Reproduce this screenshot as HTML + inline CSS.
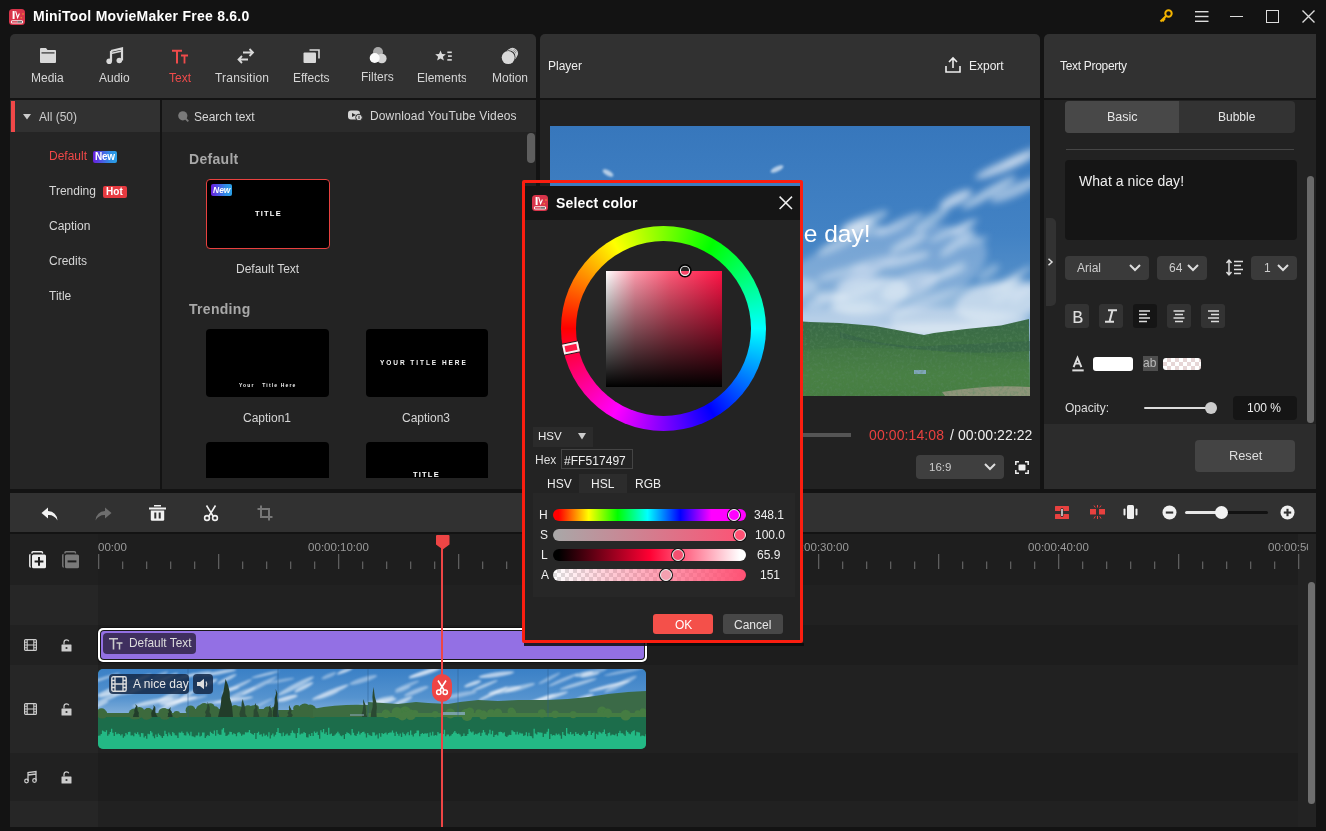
<!DOCTYPE html>
<html><head><meta charset="utf-8">
<style>
*{margin:0;padding:0;box-sizing:border-box}
html,body{width:1326px;height:831px;overflow:hidden;background:#131313;font-family:"Liberation Sans",sans-serif;color:#ddd}
.a{position:absolute}
.t{position:absolute;white-space:nowrap;line-height:1;will-change:transform}
svg{position:absolute;overflow:visible}
.lbl{font-size:12px;color:#d6d6d6}
</style></head><body>
<!-- TITLE BAR -->
<svg style="left:9px;top:9px" width="16" height="16" viewBox="0 0 16 16">
 <rect x="0" y="0" width="16" height="16" rx="3.5" fill="#d8344a"/>
 <rect x="3.6" y="2" width="2" height="8" fill="#fff"/>
 <path d="M6.6 2.2 L8.6 8.6 L10.4 4.6" stroke="#fff" stroke-width="1.1" fill="none"/>
 <circle cx="14" cy="5" r="0.8" fill="#f4a030"/><circle cx="12.2" cy="8.8" r="0.7" fill="#f4a030"/>
 <rect x="1.8" y="11.3" width="12.4" height="3.2" rx="1.6" fill="#f4f4f4"/>
 <rect x="3" y="12.2" width="5.5" height="1.4" fill="#d8344a"/>
 <rect x="8.5" y="12.2" width="4.5" height="1.4" fill="#555"/>
</svg>
<div class="t" style="left:33px;top:9px;font-size:14px;font-weight:bold;color:#fff;letter-spacing:0.25px">MiniTool MovieMaker Free 8.6.0</div>
<!-- key -->
<svg style="left:1159px;top:9px" width="14" height="14" viewBox="0 0 14 14">
 <circle cx="9.5" cy="4.5" r="3.2" fill="none" stroke="#f4b400" stroke-width="2"/>
 <path d="M7.3 6.7 L1.5 12.5 M3.2 10.8 L4.8 12.4 M4.6 9.4 L6 10.8" stroke="#f4b400" stroke-width="2" fill="none"/>
</svg>
<svg style="left:1195px;top:11px" width="14" height="11" viewBox="0 0 14 11">
 <rect x="0" y="0" width="13.5" height="1.4" fill="#ddd"/><rect x="0" y="4.8" width="13.5" height="1.4" fill="#ddd"/><rect x="0" y="9.6" width="13.5" height="1.4" fill="#ddd"/>
</svg>
<div class="a" style="left:1230px;top:15.5px;width:13px;height:1.4px;background:#ddd"></div>
<div class="a" style="left:1266px;top:10px;width:13px;height:12.5px;border:1.3px solid #ddd"></div>
<svg style="left:1302px;top:10px" width="13" height="13" viewBox="0 0 13 13"><path d="M0.5 0.5 L12.5 12.5 M12.5 0.5 L0.5 12.5" stroke="#ddd" stroke-width="1.4"/></svg>

<!-- TOP LEFT TOOLBAR -->
<div class="a" style="left:10px;top:34px;width:526px;height:64px;background:#313131;border-radius:5px 5px 0 0"></div>
<!-- media icon -->
<svg style="left:40px;top:48px" width="16" height="15" viewBox="0 0 16 15">
 <path d="M0 1 Q0 0 1 0 L6 0 L7.5 2 L15 2 Q16 2 16 3 L16 14 Q16 15 15 15 L1 15 Q0 15 0 14 Z" fill="#d9d9d9"/>
 <rect x="1.5" y="4.3" width="13" height="1.2" fill="#313131"/>
</svg>
<div class="t lbl" style="left:31px;top:72px">Media</div>
<!-- audio icon -->
<svg style="left:106px;top:48px" width="17" height="16" viewBox="0 0 17 16">
 <path d="M5 3 L16 0.5 L16 12.5" stroke="#d9d9d9" stroke-width="2.2" fill="none"/>
 <path d="M5 3 L5 13" stroke="#d9d9d9" stroke-width="2.2"/>
 <path d="M5 5.5 L16 3" stroke="#d9d9d9" stroke-width="1.6"/>
 <circle cx="3.2" cy="13.2" r="2.8" fill="#d9d9d9"/><circle cx="13.3" cy="12.5" r="2.8" fill="#d9d9d9"/>
</svg>
<div class="t lbl" style="left:99px;top:72px">Audio</div>
<!-- text icon -->
<svg style="left:172px;top:50px" width="16" height="14" viewBox="0 0 16 14">
 <path d="M0 0.8 H10 M5 0.8 V13.5" stroke="#ef4b4b" stroke-width="2"/>
 <path d="M9 5.5 H16 M12.5 5.5 V13.5" stroke="#ef4b4b" stroke-width="1.8"/>
</svg>
<div class="t lbl" style="left:169px;top:72px;color:#ef4b4b">Text</div>
<!-- transition icon -->
<svg style="left:237px;top:48px" width="18" height="16" viewBox="0 0 18 16">
 <path d="M6 4.5 H16 M12.5 1 L16 4.5 L12.5 8" stroke="#d9d9d9" stroke-width="1.8" fill="none"/>
 <path d="M11 11.5 H1.5 M5 8 L1.5 11.5 L5 15" stroke="#d9d9d9" stroke-width="1.8" fill="none"/>
</svg>
<div class="t lbl" style="left:215px;top:72px;letter-spacing:0.2px">Transition</div>
<!-- effects icon -->
<svg style="left:303px;top:48px" width="18" height="16" viewBox="0 0 18 16">
 <path d="M6.5 2 H16 V10.5" stroke="#d9d9d9" stroke-width="1.6" fill="none"/>
 <rect x="0.5" y="4.5" width="12.5" height="10.5" rx="1" fill="#d9d9d9"/>
</svg>
<div class="t lbl" style="left:293px;top:72px">Effects</div>
<!-- filters icon -->
<svg style="left:369px;top:46px" width="18" height="18" viewBox="0 0 18 18">
 <circle cx="9" cy="6" r="5" fill="#a9a9a9"/>
 <circle cx="12.8" cy="12.5" r="4.8" fill="#d4d4d4"/>
 <circle cx="5.7" cy="12" r="5" fill="#fafafa"/>
</svg>
<div class="t lbl" style="left:361px;top:71px">Filters</div>
<!-- elements icon -->
<svg style="left:435px;top:50px" width="18" height="12" viewBox="0 0 18 12">
 <path d="M5.5 0.5 L7 4 L10.8 4.2 L7.9 6.7 L8.9 10.5 L5.5 8.4 L2.1 10.5 L3.1 6.7 L0.2 4.2 L4 4 Z" fill="#d9d9d9"/>
 <rect x="12.3" y="1.5" width="4.5" height="1.6" fill="#d9d9d9"/><rect x="13" y="5.3" width="3.8" height="1.6" fill="#d9d9d9"/><rect x="12.3" y="9.1" width="4.5" height="1.6" fill="#d9d9d9"/>
</svg>
<div class="t lbl" style="left:417px;top:72px;width:48.5px;overflow:hidden">Elements</div>
<!-- motion icon -->
<svg style="left:501px;top:47px" width="19" height="17" viewBox="0 0 19 17">
 <path d="M6.02 3.67 A6.1 6.1 0 0 1 14.13 11.78 M7.63 2.72 A5.6 5.6 0 0 1 15.08 10.17 M9.29 1.87 A5.0 5.0 0 0 1 15.93 8.51 " stroke="#d0d0d0" stroke-width="1.2" fill="none"/>
 <circle cx="7.2" cy="10.6" r="7.2" fill="#313131"/>
 <circle cx="7.2" cy="10.6" r="6.5" fill="#d9d9d9"/>
</svg>
<div class="t lbl" style="left:492px;top:72px">Motion</div>

<!-- LEFT SIDEBAR -->
<div class="a" style="left:10px;top:100px;width:150px;height:389px;background:#252525"></div>
<div class="a" style="left:10px;top:100px;width:150px;height:32px;background:#313131"></div>
<div class="a" style="left:11px;top:101px;width:4px;height:31px;background:#f04848"></div>
<svg style="left:23px;top:114px" width="8" height="6" viewBox="0 0 8 6"><path d="M0 0 H8 L4 5.5 Z" fill="#ccc"/></svg>
<div class="t lbl" style="left:39px;top:111px;color:#ccc">All (50)</div>
<div class="t lbl" style="left:49px;top:150px;color:#f04848">Default</div>
<div class="a" style="left:93px;top:151px;width:24px;height:12px;border-radius:2px;background:linear-gradient(90deg,#6a1ee0,#2f8ee6 70%,#2aa0e6)"></div>
<div class="t" style="left:94.5px;top:152px;font-size:10px;font-weight:bold;color:#fff;letter-spacing:-0.3px">New</div>
<div class="t lbl" style="left:49px;top:185px">Trending</div>
<div class="a" style="left:103px;top:186px;width:24px;height:12px;border-radius:2px;background:#e63a40"></div>
<div class="t" style="left:105.5px;top:187px;font-size:10px;font-weight:bold;color:#fff;letter-spacing:0.1px">Hot</div>
<div class="t lbl" style="left:49px;top:220px">Caption</div>
<div class="t lbl" style="left:49px;top:255px">Credits</div>
<div class="t lbl" style="left:49px;top:290px">Title</div>

<!-- CONTENT -->
<div class="a" style="left:162px;top:100px;width:374px;height:389px;background:#232323"></div>
<div class="a" style="left:162px;top:100px;width:374px;height:32px;background:#2b2b2b"></div>
<svg style="left:178px;top:111px" width="11" height="11" viewBox="0 0 11 11"><circle cx="4.8" cy="4.8" r="4.6" fill="#7a7a7a"/><path d="M7.5 7.5 L10.3 10.3" stroke="#7a7a7a" stroke-width="1.8"/></svg>
<div class="t lbl" style="left:194px;top:111px">Search text</div>
<svg style="left:348px;top:110px" width="15" height="11" viewBox="0 0 15 11">
 <rect x="0" y="0.5" width="12" height="9" rx="3" fill="#d6d6d6"/>
 <path d="M4 3 L8 5 L4 7 Z" fill="#2b2b2b"/>
 <circle cx="11" cy="7.5" r="3.3" fill="#d6d6d6" stroke="#2b2b2b" stroke-width="1"/>
 <path d="M11 5.8 V9" stroke="#2b2b2b" stroke-width="1"/>
</svg>
<div class="t lbl" style="left:370px;top:110px;letter-spacing:0.14px">Download YouTube Videos</div>
<div class="a" style="left:527px;top:133px;width:8px;height:30px;border-radius:4px;background:#5e5e5e"></div>

<div class="t" style="left:188.5px;top:152px;font-size:14px;font-weight:bold;color:#a8a8a8;letter-spacing:0.3px">Default</div>
<div class="a" style="left:206px;top:179px;width:124px;height:70px;background:#000;border:1px solid #e8413f;border-radius:4px"></div>
<div class="a" style="left:211px;top:184px;width:21px;height:12px;border-radius:2px;background:linear-gradient(90deg,#6a1ee0,#2f8ee6 70%,#2aa0e6)"></div>
<div class="t" style="left:212.5px;top:186px;font-size:8.5px;font-weight:bold;color:#fff;font-style:italic">New</div>
<div class="t" style="left:254.5px;top:210px;font-size:7.5px;font-weight:bold;color:#fff;letter-spacing:1.2px">TITLE</div>
<div class="t lbl" style="left:236px;top:263px">Default Text</div>

<div class="t" style="left:188.5px;top:302px;font-size:14px;font-weight:bold;color:#a8a8a8;letter-spacing:0.3px">Trending</div>
<div class="a" style="left:206px;top:329px;width:123px;height:68px;background:#000;border-radius:4px"></div>
<div class="t" style="left:239px;top:383px;font-size:5px;font-weight:bold;color:#eee;letter-spacing:1.15px">Your&nbsp;&nbsp; Title Here</div>
<div class="t lbl" style="left:243px;top:412px">Caption1</div>
<div class="a" style="left:366px;top:329px;width:122px;height:68px;background:#000;border-radius:4px"></div>
<div class="t" style="left:380px;top:360px;font-size:6.5px;font-weight:bold;color:#f4f4f4;letter-spacing:1.95px">YOUR TITLE HERE</div>
<div class="t lbl" style="left:402px;top:412px">Caption3</div>
<div class="a" style="left:206px;top:442px;width:123px;height:36px;background:#000;border-radius:4px 4px 0 0"></div>
<div class="a" style="left:366px;top:442px;width:122px;height:36px;background:#000;border-radius:4px 4px 0 0;overflow:hidden">
 <div class="t" style="left:47px;top:29px;font-size:7.5px;font-weight:bold;color:#fff;letter-spacing:1.2px">TITLE</div>
</div>

<!-- PLAYER -->
<div class="a" style="left:540px;top:34px;width:500px;height:64px;background:#313131;border-radius:5px 5px 0 0"></div>
<div class="t lbl" style="left:548px;top:60px;color:#eee">Player</div>
<svg style="left:945px;top:57px" width="16" height="16" viewBox="0 0 16 16">
 <path d="M8 11 V1.5 M4 5 L8 1 L12 5" stroke="#eee" stroke-width="1.6" fill="none"/>
 <path d="M1 9 V15 H15 V9" stroke="#eee" stroke-width="1.6" fill="none"/>
</svg>
<div class="t lbl" style="left:969px;top:60px;color:#eee">Export</div>
<div class="a" style="left:540px;top:100px;width:500px;height:389px;background:#222"></div>
<div id="video" class="a" style="left:550px;top:126px;width:480px;height:270px;overflow:hidden;background:#3b7cc0">
<svg style="left:0;top:0" width="480" height="270" viewBox="0 0 480 270">
 <defs>
  <linearGradient id="sky" x1="0" y1="0" x2="0" y2="1">
   <stop offset="0" stop-color="#3777bc"/><stop offset="0.4" stop-color="#4282c4"/><stop offset="0.7" stop-color="#5f97cc"/><stop offset="0.8" stop-color="#8fb5da"/>
  </linearGradient>
  <linearGradient id="mtn" x1="0" y1="0" x2="0" y2="1">
   <stop offset="0" stop-color="#386848"/><stop offset="0.4" stop-color="#3f7244"/><stop offset="0.75" stop-color="#488044"/><stop offset="1" stop-color="#457c40"/>
  </linearGradient>
  <filter id="bl2v" x="-50%" y="-100%" width="200%" height="300%"><feGaussianBlur stdDeviation="1.2"/></filter>
  <filter id="bl" x="-50%" y="-100%" width="200%" height="300%"><feGaussianBlur stdDeviation="3.5"/></filter>
 </defs>
 <rect width="480" height="270" fill="url(#sky)"/>
 <g filter="url(#bl)" fill="#e9f0f7"><ellipse cx="330.0" cy="150.0" rx="110.0" ry="45.0" transform="rotate(-15.0 330.0 150.0)" opacity="0.30"/><ellipse cx="420.0" cy="185.0" rx="80.0" ry="25.0" transform="rotate(-8.0 420.0 185.0)" opacity="0.40"/><ellipse cx="340.0" cy="195.0" rx="140.0" ry="14.0" transform="rotate(0.0 340.0 195.0)" opacity="0.45"/><ellipse cx="320.0" cy="170.0" rx="40.0" ry="18.0" transform="rotate(-10.0 320.0 170.0)" opacity="0.55"/><ellipse cx="360.0" cy="160.0" rx="30.0" ry="12.0" transform="rotate(-20.0 360.0 160.0)" opacity="0.45"/><ellipse cx="292.9" cy="114.3" rx="29.1" ry="5.8" transform="rotate(-28.7 292.9 114.3)" opacity="0.46"/><ellipse cx="313.5" cy="97.0" rx="27.1" ry="5.7" transform="rotate(-25.4 313.5 97.0)" opacity="0.48"/><ellipse cx="349.6" cy="98.2" rx="25.6" ry="4.7" transform="rotate(-24.5 349.6 98.2)" opacity="0.52"/><ellipse cx="381.3" cy="93.6" rx="20.2" ry="5.4" transform="rotate(-32.3 381.3 93.6)" opacity="0.48"/><ellipse cx="405.7" cy="73.2" rx="18.0" ry="5.6" transform="rotate(-27.1 405.7 73.2)" opacity="0.70"/><ellipse cx="439.0" cy="66.6" rx="31.5" ry="4.6" transform="rotate(-31.0 439.0 66.6)" opacity="0.62"/><ellipse cx="466.0" cy="63.9" rx="27.7" ry="5.9" transform="rotate(-24.7 466.0 63.9)" opacity="0.54"/><ellipse cx="413.3" cy="101.7" rx="13.0" ry="3.3" transform="rotate(-33.1 413.3 101.7)" opacity="0.50"/><ellipse cx="400.3" cy="144.2" rx="17.4" ry="3.3" transform="rotate(-27.1 400.3 144.2)" opacity="0.43"/><ellipse cx="438.5" cy="146.4" rx="12.9" ry="4.9" transform="rotate(-36.2 438.5 146.4)" opacity="0.36"/><ellipse cx="460.0" cy="157.6" rx="12.3" ry="4.5" transform="rotate(-35.3 460.0 157.6)" opacity="0.35"/><ellipse cx="403.7" cy="104.5" rx="27.3" ry="3.0" transform="rotate(-24.1 403.7 104.5)" opacity="0.54"/><ellipse cx="474.4" cy="165.4" rx="17.5" ry="3.4" transform="rotate(-40.2 474.4 165.4)" opacity="0.38"/><ellipse cx="459.9" cy="153.8" rx="25.8" ry="2.6" transform="rotate(-31.6 459.9 153.8)" opacity="0.59"/><ellipse cx="407.3" cy="117.3" rx="21.8" ry="4.8" transform="rotate(-37.3 407.3 117.3)" opacity="0.49"/><ellipse cx="425.0" cy="115.3" rx="14.8" ry="2.7" transform="rotate(-18.5 425.0 115.3)" opacity="0.39"/><ellipse cx="455.1" cy="169.7" rx="14.6" ry="2.6" transform="rotate(-22.6 455.1 169.7)" opacity="0.45"/><ellipse cx="293.2" cy="146.4" rx="26.9" ry="4.4" transform="rotate(-15.8 293.2 146.4)" opacity="0.41"/><ellipse cx="267.8" cy="177.0" rx="12.6" ry="4.5" transform="rotate(-12.8 267.8 177.0)" opacity="0.48"/><ellipse cx="393.0" cy="149.9" rx="26.2" ry="3.3" transform="rotate(-18.6 393.0 149.9)" opacity="0.41"/><ellipse cx="280.9" cy="170.2" rx="17.3" ry="4.4" transform="rotate(0.6 280.9 170.2)" opacity="0.54"/><ellipse cx="323.5" cy="136.4" rx="25.1" ry="4.4" transform="rotate(-15.1 323.5 136.4)" opacity="0.37"/><ellipse cx="316.5" cy="103.9" rx="18.8" ry="6.0" transform="rotate(-4.1 316.5 103.9)" opacity="0.42"/><ellipse cx="307.4" cy="98.5" rx="16.9" ry="5.3" transform="rotate(-17.8 307.4 98.5)" opacity="0.52"/><ellipse cx="310.6" cy="164.7" rx="25.9" ry="5.1" transform="rotate(-21.9 310.6 164.7)" opacity="0.39"/><ellipse cx="358.6" cy="116.7" rx="20.7" ry="5.3" transform="rotate(-26.6 358.6 116.7)" opacity="0.47"/><ellipse cx="301.1" cy="179.8" rx="23.7" ry="4.7" transform="rotate(-5.0 301.1 179.8)" opacity="0.36"/><ellipse cx="354.0" cy="134.0" rx="26.7" ry="4.9" transform="rotate(-14.3 354.0 134.0)" opacity="0.50"/><ellipse cx="308.7" cy="151.2" rx="25.3" ry="5.5" transform="rotate(-24.1 308.7 151.2)" opacity="0.52"/><ellipse cx="450.0" cy="175.0" rx="45.0" ry="20.0" transform="rotate(-10.0 450.0 175.0)" opacity="0.55"/><ellipse cx="400.0" cy="205.0" rx="90.0" ry="8.0" transform="rotate(0.0 400.0 205.0)" opacity="0.50"/><ellipse cx="455.0" cy="40.0" rx="32.0" ry="5.0" transform="rotate(-22.0 455.0 40.0)" opacity="0.70"/><ellipse cx="470.0" cy="30.0" rx="20.0" ry="3.0" transform="rotate(-25.0 470.0 30.0)" opacity="0.50"/><ellipse cx="150.0" cy="180.0" rx="120.0" ry="20.0" transform="rotate(-10.0 150.0 180.0)" opacity="0.40"/></g>
 <path d="M0 195 L60 192 L120 190 L200 192 L260 196 L290 197 L325 200 L374 209 L384 207 L416 203 L451 199.5 L479 193 L480 270 L0 270 Z" fill="url(#mtn)"/>
 <path d="M250 225 Q330 215 480 236 L480 270 L250 270 Z" fill="#4a8244" opacity="0.35"/>
 <path d="M290 206 Q340 222 380 220 L480 215 L480 225 Q400 232 290 212 Z" fill="#34604a" opacity="0.5"/>
 <path d="M392 266 Q440 258 480 261 L480 270 L395 270 Z" fill="#a69e8c" opacity="0.75"/>
 <rect x="364" y="244" width="12" height="4" fill="#8fb0d8" opacity="0.8"/>
 
 <g filter="url(#bl2v)" fill="#eaf1f8"><ellipse cx="58" cy="47" rx="6" ry="2.5" transform="rotate(30 58 47)" opacity="0.7"/><ellipse cx="227" cy="43" rx="7" ry="2.5" transform="rotate(-25 227 43)" opacity="0.7"/></g>
 <filter id="noise" x="0" y="0" width="100%" height="100%"><feTurbulence type="fractalNoise" baseFrequency="0.35" numOctaves="2" seed="4"/><feColorMatrix values="0 0 0 0 0.1  0 0 0 0 0.25  0 0 0 0 0.12  0 0 0 -2.2 1.2"/></filter>
 <clipPath id="mclip"><path d="M0 195 L60 192 L120 190 L200 192 L260 196 L290 197 L325 200 L374 209 L384 207 L416 203 L451 199.5 L479 193 L480 270 L0 270 Z"/></clipPath>
 <rect x="0" y="185" width="480" height="85" filter="url(#noise)" clip-path="url(#mclip)" opacity="0.55"/>
</svg>
<div class="t" style="left:138.2px;top:96px;font-size:24.5px;color:#fff">What a nice day!</div>
</div>
</div>
<div class="a" style="left:550px;top:433px;width:301px;height:4px;background:#555"></div>
<div class="t" style="left:869px;top:428px;font-size:14px;color:#e8413f;letter-spacing:0.1px">00:00:14:08</div>
<div class="t" style="left:950px;top:428px;font-size:14px;color:#eee;letter-spacing:0.05px">/ 00:00:22:22</div>
<div class="a" style="left:916px;top:455px;width:88px;height:24px;background:#3f3f3f;border-radius:4px"></div>
<div class="t" style="left:929px;top:462px;font-size:11.5px;color:#ccc">16:9</div>
<svg style="left:984px;top:463px" width="12" height="7" viewBox="0 0 12 7"><path d="M1 1 L6 6 L11 1" stroke="#ddd" stroke-width="2" fill="none"/></svg>
<svg style="left:1015px;top:461px" width="14" height="13" viewBox="0 0 14 13">
 <path d="M0.8 4 V0.8 H4 M10 0.8 H13.2 V4 M13.2 9 V12.2 H10 M4 12.2 H0.8 V9" stroke="#eee" stroke-width="1.5" fill="none"/>
 <rect x="3.5" y="3.5" width="7" height="6" rx="1" fill="#eee"/>
</svg>

<!-- TEXT PROPERTY -->
<div class="a" style="left:1044px;top:34px;width:272px;height:64px;background:#313131;border-radius:5px 0 0 0"></div>
<div class="t" style="left:1060px;top:60px;font-size:12px;color:#eee;letter-spacing:-0.3px">Text Property</div>
<div class="a" style="left:1044px;top:100px;width:272px;height:324px;background:#222"></div>
<div class="a" style="left:1044px;top:424px;width:272px;height:65px;background:#2c2c2c"></div>


<!-- TP CONTENT -->
<div class="a" style="left:1065px;top:101px;width:230px;height:32px;background:#333;border-radius:4px"></div>
<div class="a" style="left:1065px;top:101px;width:114px;height:32px;background:#484848;border-radius:4px 0 0 4px"></div>
<div class="t lbl" style="left:1107px;top:111px;color:#e6e6e6;font-size:12.5px">Basic</div>
<div class="t lbl" style="left:1218px;top:111px;color:#e6e6e6">Bubble</div>
<div class="a" style="left:1066px;top:149px;width:228px;height:1px;background:#464646"></div>
<div class="a" style="left:1065px;top:160px;width:232px;height:80px;background:#151515;border-radius:4px"></div>
<div class="t" style="left:1079px;top:174px;font-size:14px;color:#eee;letter-spacing:0.05px">What a nice day!</div>
<div class="a" style="left:1307px;top:176px;width:7px;height:247px;border-radius:3.5px;background:#6a6a6a"></div>
<div class="a" style="left:1046px;top:218px;width:10px;height:88px;border-radius:0 5px 5px 0;background:#323232"></div>
<svg style="left:1047px;top:258px" width="7" height="8" viewBox="0 0 7 8"><path d="M1.5 0.8 L5 4 L1.5 7.2" stroke="#ddd" stroke-width="1.5" fill="none"/></svg>
<div class="a" style="left:1065px;top:256px;width:84px;height:24px;background:#3a3a3a;border-radius:4px"></div>
<div class="t lbl" style="left:1077px;top:262px;color:#ccc">Arial</div>
<svg style="left:1129px;top:264px" width="12" height="8" viewBox="0 0 12 8"><path d="M1 1 L6 6 L11 1" stroke="#ddd" stroke-width="2" fill="none"/></svg>
<div class="a" style="left:1157px;top:256px;width:50px;height:24px;background:#3a3a3a;border-radius:4px"></div>
<div class="t lbl" style="left:1169px;top:262px;color:#ccc">64</div>
<svg style="left:1187px;top:264px" width="12" height="8" viewBox="0 0 12 8"><path d="M1 1 L6 6 L11 1" stroke="#ddd" stroke-width="2" fill="none"/></svg>
<svg style="left:1226px;top:259px" width="17" height="17" viewBox="0 0 17 17">
 <path d="M3 1.5 V15.5 M0.5 4 L3 1.2 L5.5 4 M0.5 13 L3 15.8 L5.5 13" stroke="#ddd" stroke-width="1.5" fill="none"/>
 <path d="M8 2.5 H17 M8 6.5 H15 M8 10.5 H17 M8 14.5 H15" stroke="#ddd" stroke-width="1.6"/>
</svg>
<div class="a" style="left:1251px;top:256px;width:46px;height:24px;background:#3a3a3a;border-radius:4px"></div>
<div class="t lbl" style="left:1264px;top:262px;color:#ccc">1</div>
<svg style="left:1277px;top:264px" width="12" height="8" viewBox="0 0 12 8"><path d="M1 1 L6 6 L11 1" stroke="#ddd" stroke-width="2" fill="none"/></svg>
<div class="a" style="left:1065px;top:304px;width:24px;height:24px;background:#333;border-radius:3px"></div>
<svg style="left:1072px;top:310px" width="12" height="14" viewBox="0 0 12 14"><path d="M1.6 1 H6.2 Q9.6 1 9.6 3.7 Q9.6 6 7.2 6.6 Q10.6 7.1 10.6 9.8 Q10.6 13 6.8 13 H1.6 Z M3.4 2.6 V6 H6 Q7.8 6 7.8 4.3 Q7.8 2.6 6 2.6 Z M3.4 7.5 V11.4 H6.4 Q8.7 11.4 8.7 9.45 Q8.7 7.5 6.4 7.5 Z" fill="#ddd" fill-rule="evenodd"/></svg>
<div class="a" style="left:1099px;top:304px;width:24px;height:24px;background:#333;border-radius:3px"></div>
<svg style="left:1104px;top:309px" width="14" height="14" viewBox="0 0 14 14"><path d="M4 1.2 H13 M1 12.8 H10 M8.5 1.2 L5.5 12.8" stroke="#ddd" stroke-width="2" fill="none"/></svg>
<div class="a" style="left:1133px;top:304px;width:24px;height:24px;background:#151515;border-radius:3px"></div>
<svg style="left:1139px;top:310px" width="12" height="13" viewBox="0 0 12 13"><path d="M0 1 H11 M0 4.5 H8 M0 8 H11 M0 11.5 H8" stroke="#ddd" stroke-width="1.6"/></svg>
<div class="a" style="left:1167px;top:304px;width:24px;height:24px;background:#333;border-radius:3px"></div>
<svg style="left:1173px;top:310px" width="12" height="13" viewBox="0 0 12 13"><path d="M0.5 1 H11.5 M2 4.5 H10 M0.5 8 H11.5 M2 11.5 H10" stroke="#ddd" stroke-width="1.6"/></svg>
<div class="a" style="left:1201px;top:304px;width:24px;height:24px;background:#333;border-radius:3px"></div>
<svg style="left:1207px;top:310px" width="12" height="13" viewBox="0 0 12 13"><path d="M1 1 H12 M4 4.5 H12 M1 8 H12 M4 11.5 H12" stroke="#ddd" stroke-width="1.6"/></svg>
<svg style="left:1071px;top:357px" width="14" height="15" viewBox="0 0 14 15"><path d="M2.6 10.2 L6.5 0.8 L10.4 10.2 M4.2 6.6 H8.8" stroke="#ddd" stroke-width="1.9" fill="none"/><rect x="1.3" y="12.4" width="11.4" height="2" fill="#ddd"/></svg>
<div class="a" style="left:1093px;top:357px;width:40px;height:14px;background:#fff;border-radius:3px"></div>
<div class="a" style="left:1143px;top:356px;width:15px;height:15px;background:#4e4e4e"></div>
<div class="t" style="left:1143px;top:357px;font-size:12px;color:#bbb">ab</div>
<div class="a" style="left:1163px;top:358px;width:38px;height:12px;border-radius:3px;background-color:#fff;background-image:linear-gradient(45deg,#e6d6d6 25%,transparent 25%,transparent 75%,#e6d6d6 75%),linear-gradient(45deg,#e6d6d6 25%,transparent 25%,transparent 75%,#e6d6d6 75%);background-size:8px 8px;background-position:0 0,4px 4px"></div>
<div class="t lbl" style="left:1065px;top:402px;color:#ddd">Opacity:</div>
<div class="a" style="left:1144px;top:407px;width:70px;height:2px;background:#ddd;border-radius:1px"></div>
<div class="a" style="left:1205px;top:402px;width:12px;height:12px;border-radius:6px;background:#ccc"></div>
<div class="a" style="left:1233px;top:396px;width:64px;height:24px;background:#151515;border-radius:4px"></div>
<div class="t lbl" style="left:1247px;top:402px;color:#eee">100 %</div>
<div class="a" style="left:1195px;top:440px;width:100px;height:32px;background:#444;border-radius:4px"></div>
<div class="t lbl" style="left:1229px;top:450px;color:#ddd;font-size:12.8px">Reset</div>

<!-- TIMELINE -->
<div class="a" style="left:10px;top:493px;width:1306px;height:39px;background:#313131"></div>

<!-- TIMELINE TOOLBAR -->
<svg style="left:41px;top:507px" width="17" height="14" viewBox="0 0 17 14">
 <path d="M7 0.5 L0.5 6 L7 11.5 V8 Q13 7.5 16.5 13.5 Q15.5 4.5 7 4 Z" fill="#f2f2f2"/>
</svg>
<svg style="left:95px;top:507px" width="17" height="14" viewBox="0 0 17 14">
 <path d="M10 0.5 L16.5 6 L10 11.5 V8 Q4 7.5 0.5 13.5 Q1.5 4.5 10 4 Z" fill="#6e6e6e"/>
</svg>
<svg style="left:149px;top:505px" width="17" height="16" viewBox="0 0 17 16">
 <rect x="5" y="0" width="7" height="1.5" fill="#f2f2f2"/>
 <rect x="0" y="2.5" width="17" height="2" fill="#f2f2f2"/>
 <path d="M1.8 5.5 H15.2 V14.5 Q15.2 15.8 14 15.8 H3 Q1.8 15.8 1.8 14.5 Z" fill="#f2f2f2"/>
 <rect x="5.3" y="7.5" width="2" height="6" fill="#313131"/><rect x="9.7" y="7.5" width="2" height="6" fill="#313131"/>
</svg>
<svg style="left:203px;top:505px" width="16" height="16" viewBox="0 0 16 16">
 <path d="M3.5 0.5 L10 11 M12.5 0.5 L6 11" stroke="#f2f2f2" stroke-width="1.6"/>
 <circle cx="4" cy="13" r="2.4" fill="none" stroke="#f2f2f2" stroke-width="1.6"/>
 <circle cx="12" cy="13" r="2.4" fill="none" stroke="#f2f2f2" stroke-width="1.6"/>
</svg>
<svg style="left:257px;top:505px" width="16" height="16" viewBox="0 0 16 16">
 <path d="M4 0.5 V12 H15.5 M0.5 4 H12 V15.5" stroke="#777" stroke-width="2" fill="none"/>
</svg>
<svg style="left:1055px;top:506px" width="14" height="13" viewBox="0 0 14 13">
 <rect x="0" y="0" width="14" height="5" rx="0.5" fill="#e8413f"/><rect x="0" y="8" width="14" height="5" rx="0.5" fill="#e8413f"/>
 <rect x="5.5" y="2" width="3" height="9" rx="1.5" fill="#313131"/><rect x="6.3" y="3" width="1.4" height="7" fill="#eee"/>
</svg>
<svg style="left:1090px;top:505px" width="15" height="14" viewBox="0 0 15 14">
 <rect x="0" y="4" width="6" height="5.5" fill="#e8413f"/><rect x="9" y="4" width="6" height="5.5" fill="#e8413f"/>
 <path d="M7.5 0 V2.5 M7.5 11 V14 M4 0.5 L5.3 2.5 M11 0.5 L9.7 2.5 M4 13.5 L5.3 11.3 M11 13.5 L9.7 11.3" stroke="#e8413f" stroke-width="1"/>
</svg>
<svg style="left:1123px;top:505px" width="15" height="14" viewBox="0 0 15 14">
 <rect x="4" y="0" width="7" height="14" rx="1.5" fill="#f0f0f0"/>
 <rect x="0.5" y="3.5" width="2" height="7" rx="1" fill="#f0f0f0"/><rect x="12.5" y="3.5" width="2" height="7" rx="1" fill="#f0f0f0"/>
</svg>
<svg style="left:1162px;top:505px" width="15" height="15" viewBox="0 0 15 15"><circle cx="7.5" cy="7.5" r="7" fill="#f0f0f0"/><rect x="3.8" y="6.5" width="7.4" height="2.1" fill="#313131"/></svg>
<div class="a" style="left:1185px;top:511px;width:83px;height:3px;background:#121212;border-radius:1.5px"></div>
<div class="a" style="left:1185px;top:511px;width:36px;height:3px;background:#e6e6e6;border-radius:1.5px"></div>
<div class="a" style="left:1214.5px;top:506px;width:13px;height:13px;border-radius:50%;background:#f2f2f2"></div>
<svg style="left:1280px;top:505px" width="15" height="15" viewBox="0 0 15 15"><circle cx="7.5" cy="7.5" r="7" fill="#f0f0f0"/><rect x="3.8" y="6.5" width="7.4" height="2.1" fill="#313131"/><rect x="6.45" y="3.8" width="2.1" height="7.4" fill="#313131"/></svg>

<!-- TIMELINE BODY -->
<div class="a" style="left:10px;top:534px;width:88px;height:51px;background:#202020"></div>
<div class="a" style="left:98px;top:534px;width:1200px;height:51px;background:#1e1e1e"></div><div class="a" style="left:1298px;top:534px;width:18px;height:51px;background:#232323"></div>
<svg style="left:29px;top:551px" width="18" height="18" viewBox="0 0 18 18">
 <path d="M3 2.5 V1.8 Q3 0.8 4 0.8 H12.5 Q13.5 0.8 13.5 1.8 V2.5" stroke="#eee" stroke-width="1.4" fill="none"/>
 <path d="M1.5 3.5 Q0.8 3.5 0.8 4.5 V15 Q0.8 16 1.8 16" stroke="#eee" stroke-width="1.4" fill="none"/>
 <rect x="3" y="3.5" width="14" height="13.8" rx="1.5" fill="#eee"/>
 <path d="M10 6 V14.8 M5.6 10.4 H14.4" stroke="#1f1f1f" stroke-width="2"/>
</svg>
<svg style="left:62px;top:551px" width="18" height="18" viewBox="0 0 18 18">
 <path d="M3 2.5 V1.8 Q3 0.8 4 0.8 H12.5 Q13.5 0.8 13.5 1.8 V2.5" stroke="#7a7a7a" stroke-width="1.4" fill="none"/>
 <path d="M1.5 3.5 Q0.8 3.5 0.8 4.5 V15 Q0.8 16 1.8 16" stroke="#7a7a7a" stroke-width="1.4" fill="none"/>
 <rect x="3" y="3.5" width="14" height="13.8" rx="1.5" fill="#7a7a7a"/>
 <path d="M5.6 10.4 H14.4" stroke="#1f1f1f" stroke-width="2"/>
</svg>
<svg style="left:98px;top:554px" width="1210" height="16"><rect x="0" y="0" width="1.3" height="15" fill="#5e5e5e"/><rect x="24" y="7.5" width="1.3" height="7.5" fill="#5e5e5e"/><rect x="48" y="7.5" width="1.3" height="7.5" fill="#5e5e5e"/><rect x="72" y="7.5" width="1.3" height="7.5" fill="#5e5e5e"/><rect x="96" y="7.5" width="1.3" height="7.5" fill="#5e5e5e"/><rect x="120" y="0" width="1.3" height="15" fill="#5e5e5e"/><rect x="144" y="7.5" width="1.3" height="7.5" fill="#5e5e5e"/><rect x="168" y="7.5" width="1.3" height="7.5" fill="#5e5e5e"/><rect x="192" y="7.5" width="1.3" height="7.5" fill="#5e5e5e"/><rect x="216" y="7.5" width="1.3" height="7.5" fill="#5e5e5e"/><rect x="240" y="0" width="1.3" height="15" fill="#5e5e5e"/><rect x="264" y="7.5" width="1.3" height="7.5" fill="#5e5e5e"/><rect x="288" y="7.5" width="1.3" height="7.5" fill="#5e5e5e"/><rect x="312" y="7.5" width="1.3" height="7.5" fill="#5e5e5e"/><rect x="336" y="7.5" width="1.3" height="7.5" fill="#5e5e5e"/><rect x="360" y="0" width="1.3" height="15" fill="#5e5e5e"/><rect x="384" y="7.5" width="1.3" height="7.5" fill="#5e5e5e"/><rect x="408" y="7.5" width="1.3" height="7.5" fill="#5e5e5e"/><rect x="432" y="7.5" width="1.3" height="7.5" fill="#5e5e5e"/><rect x="456" y="7.5" width="1.3" height="7.5" fill="#5e5e5e"/><rect x="480" y="0" width="1.3" height="15" fill="#5e5e5e"/><rect x="504" y="7.5" width="1.3" height="7.5" fill="#5e5e5e"/><rect x="528" y="7.5" width="1.3" height="7.5" fill="#5e5e5e"/><rect x="552" y="7.5" width="1.3" height="7.5" fill="#5e5e5e"/><rect x="576" y="7.5" width="1.3" height="7.5" fill="#5e5e5e"/><rect x="600" y="0" width="1.3" height="15" fill="#5e5e5e"/><rect x="624" y="7.5" width="1.3" height="7.5" fill="#5e5e5e"/><rect x="648" y="7.5" width="1.3" height="7.5" fill="#5e5e5e"/><rect x="672" y="7.5" width="1.3" height="7.5" fill="#5e5e5e"/><rect x="696" y="7.5" width="1.3" height="7.5" fill="#5e5e5e"/><rect x="720" y="0" width="1.3" height="15" fill="#5e5e5e"/><rect x="744" y="7.5" width="1.3" height="7.5" fill="#5e5e5e"/><rect x="768" y="7.5" width="1.3" height="7.5" fill="#5e5e5e"/><rect x="792" y="7.5" width="1.3" height="7.5" fill="#5e5e5e"/><rect x="816" y="7.5" width="1.3" height="7.5" fill="#5e5e5e"/><rect x="840" y="0" width="1.3" height="15" fill="#5e5e5e"/><rect x="864" y="7.5" width="1.3" height="7.5" fill="#5e5e5e"/><rect x="888" y="7.5" width="1.3" height="7.5" fill="#5e5e5e"/><rect x="912" y="7.5" width="1.3" height="7.5" fill="#5e5e5e"/><rect x="936" y="7.5" width="1.3" height="7.5" fill="#5e5e5e"/><rect x="960" y="0" width="1.3" height="15" fill="#5e5e5e"/><rect x="984" y="7.5" width="1.3" height="7.5" fill="#5e5e5e"/><rect x="1008" y="7.5" width="1.3" height="7.5" fill="#5e5e5e"/><rect x="1032" y="7.5" width="1.3" height="7.5" fill="#5e5e5e"/><rect x="1056" y="7.5" width="1.3" height="7.5" fill="#5e5e5e"/><rect x="1080" y="0" width="1.3" height="15" fill="#5e5e5e"/><rect x="1104" y="7.5" width="1.3" height="7.5" fill="#5e5e5e"/><rect x="1128" y="7.5" width="1.3" height="7.5" fill="#5e5e5e"/><rect x="1152" y="7.5" width="1.3" height="7.5" fill="#5e5e5e"/><rect x="1176" y="7.5" width="1.3" height="7.5" fill="#5e5e5e"/><rect x="1200" y="0" width="1.3" height="15" fill="#5e5e5e"/></svg>
<div class="t" style="left:98px;top:542px;font-size:11.5px;color:#9a9a9a">00:00</div>
<div class="t" style="left:308px;top:542px;font-size:11.5px;color:#9a9a9a;width:61px;text-align:center">00:00:10:00</div>
<div class="t" style="left:548px;top:542px;font-size:11.5px;color:#9a9a9a;width:61px;text-align:center">00:00:20:00</div>
<div class="t" style="left:788px;top:542px;font-size:11.5px;color:#9a9a9a;width:61px;text-align:center">00:00:30:00</div>
<div class="t" style="left:1028px;top:542px;font-size:11.5px;color:#9a9a9a;width:61px;text-align:center">00:00:40:00</div>
<div class="a" style="left:1268px;top:540px;width:40px;height:14px;overflow:hidden"><div class="t" style="left:0;top:2px;font-size:11.5px;color:#9a9a9a">00:00:50:00</div></div>

<!-- rows -->
<div class="a" style="left:10px;top:585px;width:1288px;height:40px;background:#262626"></div>
<div class="a" style="left:10px;top:625px;width:1288px;height:40px;background:#212121"></div>
<div class="a" style="left:10px;top:665px;width:1288px;height:88px;background:#262626"></div>
<div class="a" style="left:10px;top:753px;width:1288px;height:48px;background:#212121"></div>
<div class="a" style="left:10px;top:801px;width:1288px;height:26px;background:#262626"></div>
<div class="a" style="left:98px;top:585px;width:1200px;height:40px;background:#212121"></div>
<div class="a" style="left:98px;top:625px;width:1200px;height:40px;background:#1d1d1d"></div>
<div class="a" style="left:98px;top:665px;width:1200px;height:88px;background:#212121"></div>
<div class="a" style="left:98px;top:753px;width:1200px;height:48px;background:#1d1d1d"></div>
<div class="a" style="left:98px;top:801px;width:1200px;height:26px;background:#212121"></div>
<div class="a" style="left:1298px;top:585px;width:18px;height:242px;background:#232323"></div>
<div class="a" style="left:1308px;top:582px;width:7px;height:222px;border-radius:3.5px;background:#6e6e6e"></div>
<!-- track icons -->
<svg style="left:24px;top:639px" width="13" height="12" viewBox="0 0 13 12"><rect x="0.6" y="0.6" width="11.8" height="10.8" rx="1" fill="none" stroke="#ccc" stroke-width="1.2"/><path d="M3.2 0.6 V11.4 M9.8 0.6 V11.4 M3.2 6 H9.8 M0.6 3.3 H3.2 M0.6 6 H3.2 M0.6 8.7 H3.2 M9.8 3.3 H12.4 M9.8 6 H12.4 M9.8 8.7 H12.4" stroke="#ccc" stroke-width="1.1"/></svg>
<svg style="left:61px;top:639px" width="11" height="13" viewBox="0 0 11 13"><path d="M3 5.5 V3.5 Q3 0.8 5.5 0.8 Q7.3 0.8 7.8 2.3" stroke="#ccc" stroke-width="1.2" fill="none"/><rect x="0.5" y="5.5" width="10" height="7" rx="0.5" fill="#ccc"/><circle cx="5.5" cy="9" r="1.1" fill="#333"/></svg>
<svg style="left:24px;top:703px" width="13" height="12" viewBox="0 0 13 12"><rect x="0.6" y="0.6" width="11.8" height="10.8" rx="1" fill="none" stroke="#ccc" stroke-width="1.2"/><path d="M3.2 0.6 V11.4 M9.8 0.6 V11.4 M3.2 6 H9.8 M0.6 3.3 H3.2 M0.6 6 H3.2 M0.6 8.7 H3.2 M9.8 3.3 H12.4 M9.8 6 H12.4 M9.8 8.7 H12.4" stroke="#ccc" stroke-width="1.1"/></svg>
<svg style="left:61px;top:703px" width="11" height="13" viewBox="0 0 11 13"><path d="M3 5.5 V3.5 Q3 0.8 5.5 0.8 Q7.3 0.8 7.8 2.3" stroke="#ccc" stroke-width="1.2" fill="none"/><rect x="0.5" y="5.5" width="10" height="7" rx="0.5" fill="#ccc"/><circle cx="5.5" cy="9" r="1.1" fill="#333"/></svg>
<svg style="left:24px;top:771px" width="13" height="12" viewBox="0 0 13 12"><path d="M4 10 V1.5 L12 0.5 V9.5 M4 4 L12 3" stroke="#ccc" stroke-width="1.3" fill="none"/><circle cx="2.5" cy="10" r="1.8" fill="none" stroke="#ccc" stroke-width="1.2"/><circle cx="10.5" cy="9.5" r="1.8" fill="none" stroke="#ccc" stroke-width="1.2"/></svg>
<svg style="left:61px;top:771px" width="11" height="13" viewBox="0 0 11 13"><path d="M3 5.5 V3.5 Q3 0.8 5.5 0.8 Q7.3 0.8 7.8 2.3" stroke="#ccc" stroke-width="1.2" fill="none"/><rect x="0.5" y="5.5" width="10" height="7" rx="0.5" fill="#ccc"/><circle cx="5.5" cy="9" r="1.1" fill="#333"/></svg>

<!-- text clip -->
<div class="a" style="left:98px;top:627.8px;width:549px;height:34.2px;border-radius:5px;background:#fff;box-shadow:0 0 0 1px #111"></div>
<div class="a" style="left:100.8px;top:631px;width:543.4px;height:27.6px;border-radius:3px;background:#9370e4;box-shadow:0 0 0 1px #1a1a1a"></div>
<div class="a" style="left:103px;top:633px;width:93px;height:21px;border-radius:4px;background:#3f2f5f"></div>
<svg style="left:109px;top:638px" width="14" height="12" viewBox="0 0 14 12"><path d="M0 0.8 H9 M4.5 0.8 V11.5" stroke="#ccc" stroke-width="1.6"/><path d="M7.5 5 H13.5 M10.5 5 V11.5" stroke="#ccc" stroke-width="1.5"/></svg>
<div class="t" style="left:129px;top:637.5px;font-size:11.9px;color:#ddd">Default Text</div>
<!-- video clip -->
<div id="vclip" class="a" style="left:98px;top:669px;width:548px;height:80px;border-radius:5px;overflow:hidden;background:#1c6d4b">
<svg style="left:0;top:0" width="548" height="48" viewBox="0 0 548 48"><defs><linearGradient id="tsky" x1="0" y1="0" x2="0" y2="1"><stop offset="0" stop-color="#3a80c6"/><stop offset="0.6" stop-color="#5593cf"/><stop offset="1" stop-color="#8ab4dc"/></linearGradient><filter id="tb" x="-20%" y="-100%" width="140%" height="300%"><feGaussianBlur stdDeviation="1.1"/></filter><filter id="tb2" x="-20%" y="-20%" width="140%" height="140%"><feGaussianBlur stdDeviation="0.5"/></filter></defs><rect width="548" height="48" fill="url(#tsky)"/><g filter="url(#tb)" fill="#eef3fa"><ellipse cx="141.9" cy="25.3" rx="17.6" ry="2.4" transform="rotate(-24.3 141.9 25.3)" opacity="0.44"/><ellipse cx="80.6" cy="9.7" rx="18.3" ry="1.4" transform="rotate(-17.4 80.6 9.7)" opacity="0.44"/><ellipse cx="161.5" cy="16.7" rx="19.7" ry="2.1" transform="rotate(-27.7 161.5 16.7)" opacity="0.46"/><ellipse cx="80.4" cy="31.6" rx="19.3" ry="2.3" transform="rotate(-11.5 80.4 31.6)" opacity="0.65"/><ellipse cx="520.2" cy="29.0" rx="11.6" ry="2.4" transform="rotate(-18.3 520.2 29.0)" opacity="0.65"/><ellipse cx="309.1" cy="16.6" rx="13.1" ry="1.8" transform="rotate(-21.7 309.1 16.6)" opacity="0.40"/><ellipse cx="449.2" cy="29.1" rx="21.8" ry="2.2" transform="rotate(-16.9 449.2 29.1)" opacity="0.65"/><ellipse cx="73.9" cy="25.0" rx="14.2" ry="1.4" transform="rotate(-23.9 73.9 25.0)" opacity="0.56"/><ellipse cx="138.8" cy="17.6" rx="16.5" ry="1.8" transform="rotate(-25.4 138.8 17.6)" opacity="0.55"/><ellipse cx="129.0" cy="10.0" rx="10.7" ry="1.7" transform="rotate(-26.5 129.0 10.0)" opacity="0.61"/><ellipse cx="522.6" cy="15.2" rx="18.1" ry="2.5" transform="rotate(-27.1 522.6 15.2)" opacity="0.41"/><ellipse cx="441.7" cy="30.5" rx="16.9" ry="1.4" transform="rotate(-19.7 441.7 30.5)" opacity="0.70"/><ellipse cx="485.6" cy="29.3" rx="10.8" ry="2.4" transform="rotate(-20.5 485.6 29.3)" opacity="0.64"/><ellipse cx="75.1" cy="35.0" rx="16.4" ry="2.2" transform="rotate(-23.8 75.1 35.0)" opacity="0.60"/><ellipse cx="318.3" cy="22.1" rx="13.0" ry="2.2" transform="rotate(-21.2 318.3 22.1)" opacity="0.47"/><ellipse cx="90.1" cy="25.3" rx="9.6" ry="1.5" transform="rotate(-26.6 90.1 25.3)" opacity="0.61"/><ellipse cx="304.8" cy="20.5" rx="8.5" ry="1.8" transform="rotate(-21.1 304.8 20.5)" opacity="0.39"/><ellipse cx="1.6" cy="35.9" rx="9.7" ry="1.6" transform="rotate(-22.6 1.6 35.9)" opacity="0.59"/><ellipse cx="42.4" cy="18.0" rx="13.1" ry="2.4" transform="rotate(-27.9 42.4 18.0)" opacity="0.48"/><ellipse cx="272.1" cy="35.0" rx="15.2" ry="1.9" transform="rotate(-14.6 272.1 35.0)" opacity="0.47"/><ellipse cx="17.4" cy="19.0" rx="20.7" ry="2.2" transform="rotate(-22.8 17.4 19.0)" opacity="0.62"/><ellipse cx="465.3" cy="10.8" rx="16.2" ry="1.7" transform="rotate(-23.1 465.3 10.8)" opacity="0.46"/><ellipse cx="111.7" cy="13.9" rx="8.5" ry="1.8" transform="rotate(-26.3 111.7 13.9)" opacity="0.65"/><ellipse cx="328.7" cy="2.1" rx="18.8" ry="1.5" transform="rotate(-18.4 328.7 2.1)" opacity="0.57"/><ellipse cx="182.4" cy="11.8" rx="14.1" ry="1.4" transform="rotate(-10.7 182.4 11.8)" opacity="0.39"/><ellipse cx="451.3" cy="9.4" rx="12.2" ry="1.7" transform="rotate(-27.3 451.3 9.4)" opacity="0.40"/><ellipse cx="197.8" cy="17.0" rx="20.3" ry="2.6" transform="rotate(-27.1 197.8 17.0)" opacity="0.56"/><ellipse cx="70.9" cy="29.3" rx="12.5" ry="2.5" transform="rotate(-17.1 70.9 29.3)" opacity="0.40"/><ellipse cx="2.7" cy="10.4" rx="20.2" ry="1.4" transform="rotate(-18.4 2.7 10.4)" opacity="0.50"/><ellipse cx="189.0" cy="29.3" rx="11.0" ry="2.2" transform="rotate(-14.7 189.0 29.3)" opacity="0.72"/><ellipse cx="284.9" cy="33.3" rx="14.2" ry="2.0" transform="rotate(-15.6 284.9 33.3)" opacity="0.69"/><ellipse cx="491.9" cy="5.9" rx="9.9" ry="1.9" transform="rotate(-11.8 491.9 5.9)" opacity="0.56"/><ellipse cx="164.1" cy="34.7" rx="12.2" ry="1.3" transform="rotate(-27.0 164.1 34.7)" opacity="0.36"/><ellipse cx="398.4" cy="5.6" rx="18.0" ry="2.4" transform="rotate(-8.0 398.4 5.6)" opacity="0.67"/><ellipse cx="232.5" cy="23.2" rx="19.7" ry="2.2" transform="rotate(-22.2 232.5 23.2)" opacity="0.65"/><ellipse cx="60.0" cy="12.5" rx="21.9" ry="1.9" transform="rotate(-22.6 60.0 12.5)" opacity="0.66"/><ellipse cx="246.7" cy="2.1" rx="8.4" ry="1.6" transform="rotate(-21.4 246.7 2.1)" opacity="0.72"/><ellipse cx="135.5" cy="30.9" rx="19.9" ry="1.8" transform="rotate(-8.1 135.5 30.9)" opacity="0.65"/><ellipse cx="265.3" cy="10.9" rx="14.5" ry="2.5" transform="rotate(-17.3 265.3 10.9)" opacity="0.43"/><ellipse cx="205.8" cy="18.2" rx="10.7" ry="2.0" transform="rotate(-27.3 205.8 18.2)" opacity="0.68"/><ellipse cx="97.9" cy="5.5" rx="16.2" ry="1.6" transform="rotate(-10.3 97.9 5.5)" opacity="0.55"/><ellipse cx="285.7" cy="30.4" rx="11.0" ry="2.2" transform="rotate(-15.0 285.7 30.4)" opacity="0.52"/><ellipse cx="525.7" cy="2.7" rx="20.1" ry="1.4" transform="rotate(-11.2 525.7 2.7)" opacity="0.41"/><ellipse cx="29.4" cy="19.0" rx="21.0" ry="1.6" transform="rotate(-18.3 29.4 19.0)" opacity="0.59"/><ellipse cx="133.5" cy="20.0" rx="8.1" ry="1.8" transform="rotate(-12.8 133.5 20.0)" opacity="0.49"/><ellipse cx="120.8" cy="3.7" rx="17.8" ry="1.8" transform="rotate(-9.7 120.8 3.7)" opacity="0.65"/><ellipse cx="55.0" cy="33.1" rx="21.0" ry="2.3" transform="rotate(-11.4 55.0 33.1)" opacity="0.62"/><ellipse cx="395.0" cy="24.7" rx="16.3" ry="1.6" transform="rotate(-25.3 395.0 24.7)" opacity="0.64"/><ellipse cx="326.9" cy="3.9" rx="17.0" ry="2.1" transform="rotate(-17.8 326.9 3.9)" opacity="0.66"/><ellipse cx="480.2" cy="15.0" rx="19.4" ry="1.9" transform="rotate(-16.6 480.2 15.0)" opacity="0.52"/><ellipse cx="511.3" cy="17.1" rx="21.3" ry="1.7" transform="rotate(-14.6 511.3 17.1)" opacity="0.72"/><ellipse cx="374.6" cy="14.8" rx="9.1" ry="1.9" transform="rotate(-19.7 374.6 14.8)" opacity="0.68"/><ellipse cx="429.8" cy="35.5" rx="14.3" ry="1.8" transform="rotate(-16.7 429.8 35.5)" opacity="0.65"/><ellipse cx="43.8" cy="9.3" rx="10.0" ry="1.7" transform="rotate(-22.0 43.8 9.3)" opacity="0.74"/><ellipse cx="113.8" cy="33.7" rx="12.1" ry="1.5" transform="rotate(-8.5 113.8 33.7)" opacity="0.39"/><ellipse cx="61.9" cy="6.4" rx="8.9" ry="1.7" transform="rotate(-23.8 61.9 6.4)" opacity="0.41"/><ellipse cx="8.6" cy="25.7" rx="8.7" ry="1.5" transform="rotate(-16.7 8.6 25.7)" opacity="0.70"/><ellipse cx="361.4" cy="26.1" rx="17.8" ry="2.3" transform="rotate(-10.9 361.4 26.1)" opacity="0.41"/><ellipse cx="29.6" cy="23.1" rx="15.3" ry="1.9" transform="rotate(-12.4 29.6 23.1)" opacity="0.42"/><ellipse cx="386.9" cy="16.5" rx="13.9" ry="1.5" transform="rotate(-22.4 386.9 16.5)" opacity="0.58"/><ellipse cx="303.6" cy="32.8" rx="11.9" ry="2.2" transform="rotate(-26.1 303.6 32.8)" opacity="0.61"/><ellipse cx="88.1" cy="31.2" rx="21.5" ry="1.6" transform="rotate(-11.8 88.1 31.2)" opacity="0.44"/><ellipse cx="167.4" cy="5.5" rx="14.2" ry="1.3" transform="rotate(-13.9 167.4 5.5)" opacity="0.58"/><ellipse cx="230.2" cy="26.1" rx="11.3" ry="1.7" transform="rotate(-20.7 230.2 26.1)" opacity="0.35"/><ellipse cx="486.0" cy="5.0" rx="9.4" ry="2.3" transform="rotate(-11.6 486.0 5.0)" opacity="0.53"/><ellipse cx="230.9" cy="6.7" rx="8.0" ry="1.9" transform="rotate(-23.1 230.9 6.7)" opacity="0.41"/><ellipse cx="496.3" cy="2.7" rx="13.1" ry="2.3" transform="rotate(-13.1 496.3 2.7)" opacity="0.39"/><ellipse cx="406.7" cy="21.2" rx="16.8" ry="2.5" transform="rotate(-12.0 406.7 21.2)" opacity="0.59"/><ellipse cx="421.9" cy="18.7" rx="15.7" ry="2.3" transform="rotate(-15.6 421.9 18.7)" opacity="0.50"/><ellipse cx="11.2" cy="28.8" rx="12.8" ry="1.8" transform="rotate(-22.2 11.2 28.8)" opacity="0.57"/></g><g filter="url(#tb2)"><circle cx="36.1" cy="45.1" r="5.5" fill="#3d6a3e"/><circle cx="50.3" cy="44.4" r="5.3" fill="#3d6a3e"/><circle cx="48.3" cy="45.5" r="5.3" fill="#3d6a3e"/><circle cx="66.9" cy="45.1" r="5.7" fill="#3d6a3e"/><circle cx="50.0" cy="42.7" r="3.6" fill="#3d6a3e"/><circle cx="39.1" cy="45.8" r="4.5" fill="#3d6a3e"/><circle cx="3.8" cy="45.0" r="4.0" fill="#3d6a3e"/><circle cx="41.3" cy="43.4" r="5.5" fill="#3d6a3e"/><circle cx="69.4" cy="44.4" r="4.3" fill="#3d6a3e"/><circle cx="5.1" cy="45.3" r="4.2" fill="#3d6a3e"/><circle cx="66.2" cy="44.0" r="4.7" fill="#3d6a3e"/><circle cx="3.5" cy="44.3" r="5.1" fill="#3d6a3e"/><circle cx="65.2" cy="44.0" r="4.8" fill="#3d6a3e"/><circle cx="78.7" cy="45.5" r="3.4" fill="#3d6a3e"/><rect x="0" y="44" width="90" height="4" fill="#3d6a3e"/><path d="M38.0 35.0 L37.3 35.0 L39.5 37.2 L39.4 39.3 L39.6 41.5 L40.9 43.7 L40.6 45.8 L41.0 48.0 L35.0 48.0 L35.4 45.8 L36.5 43.7 L36.2 41.5 L36.9 39.3 L38.0 37.2 L37.3 35.0 Z" fill="#233d2c"/><path d="M56.0 36.0 L55.3 36.0 L57.2 38.0 L57.5 40.0 L57.3 42.0 L57.6 44.0 L58.5 46.0 L59.7 48.0 L53.7 48.0 L53.3 46.0 L53.2 44.0 L53.9 42.0 L55.0 40.0 L55.8 38.0 L55.3 36.0 Z" fill="#233d2c"/><path d="M72.0 38.0 L72.6 38.0 L72.5 39.7 L72.3 41.3 L74.0 43.0 L73.3 44.7 L74.5 46.3 L74.5 48.0 L69.5 48.0 L70.2 46.3 L69.7 44.7 L71.1 43.0 L70.2 41.3 L71.3 39.7 L72.6 38.0 Z" fill="#233d2c"/><circle cx="176.7" cy="40.9" r="3.4" fill="#3a683c"/><circle cx="154.8" cy="39.8" r="3.1" fill="#3a683c"/><circle cx="116.5" cy="42.4" r="5.1" fill="#3a683c"/><circle cx="150.0" cy="40.7" r="4.5" fill="#3a683c"/><circle cx="112.4" cy="38.7" r="4.4" fill="#3a683c"/><circle cx="154.9" cy="39.7" r="3.2" fill="#3a683c"/><circle cx="106.2" cy="38.6" r="4.7" fill="#3a683c"/><circle cx="92.5" cy="41.3" r="4.9" fill="#3a683c"/><circle cx="169.9" cy="42.5" r="5.0" fill="#3a683c"/><circle cx="102.8" cy="41.0" r="4.9" fill="#3a683c"/><circle cx="105.8" cy="38.7" r="3.4" fill="#3a683c"/><circle cx="137.1" cy="41.5" r="5.4" fill="#3a683c"/><circle cx="141.5" cy="40.5" r="3.2" fill="#3a683c"/><circle cx="136.1" cy="40.2" r="3.5" fill="#3a683c"/><circle cx="112.1" cy="39.8" r="3.9" fill="#3a683c"/><circle cx="157.6" cy="39.4" r="3.3" fill="#3a683c"/><rect x="90" y="40" width="90" height="8" fill="#3a683c"/><path d="M128.0 10.0 L127.6 10.0 L130.1 16.3 L131.6 22.7 L131.9 29.0 L133.8 35.3 L134.4 41.7 L135.0 48.0 L120.0 48.0 L121.5 41.7 L122.9 35.3 L123.3 29.0 L125.4 22.7 L126.5 16.3 L127.6 10.0 Z" fill="#233d2c"/><path d="M110.0 33.0 L109.6 33.0 L110.8 35.5 L111.7 38.0 L111.9 40.5 L111.4 43.0 L113.0 45.5 L113.1 48.0 L107.1 48.0 L107.9 45.5 L107.0 43.0 L108.4 40.5 L109.2 38.0 L109.3 35.5 L109.6 33.0 Z" fill="#2c4a32"/><path d="M145.0 30.0 L144.9 30.0 L145.4 33.0 L146.4 36.0 L147.3 39.0 L147.2 42.0 L147.4 45.0 L149.1 48.0 L142.1 48.0 L141.4 45.0 L142.1 42.0 L143.3 39.0 L143.5 36.0 L143.8 33.0 L144.9 30.0 Z" fill="#2c4a32"/><path d="M158.0 34.0 L157.9 34.0 L158.0 36.3 L159.9 38.7 L159.1 41.0 L160.0 43.3 L160.8 45.7 L161.3 48.0 L155.3 48.0 L155.6 45.7 L155.6 43.3 L155.7 41.0 L157.4 38.7 L156.6 36.3 L157.9 34.0 Z" fill="#2c4a32"/><path d="M172.0 36.0 L172.6 36.0 L172.1 38.0 L173.1 40.0 L174.0 42.0 L173.8 44.0 L174.5 46.0 L174.4 48.0 L169.4 48.0 L170.2 46.0 L170.1 44.0 L171.2 42.0 L171.1 40.0 L170.9 38.0 L172.6 36.0 Z" fill="#2c4a32"/><circle cx="212.2" cy="41.3" r="5.9" fill="#3a683c"/><circle cx="213.2" cy="42.6" r="4.0" fill="#3a683c"/><circle cx="214.4" cy="43.3" r="5.6" fill="#3a683c"/><circle cx="206.8" cy="40.5" r="5.9" fill="#3a683c"/><circle cx="205.8" cy="40.9" r="3.2" fill="#3a683c"/><circle cx="210.9" cy="42.2" r="3.9" fill="#3a683c"/><circle cx="198.8" cy="39.6" r="3.6" fill="#3a683c"/><circle cx="206.0" cy="39.3" r="4.2" fill="#3a683c"/><rect x="180" y="41" width="45" height="7" fill="#3a683c"/><path d="M215 40 Q240 35 270 36 L270 48 L215 48 Z" fill="#3c6c40"/><path d="M178.0 20.0 L177.7 20.0 L179.5 24.7 L179.2 29.3 L180.0 34.0 L180.1 38.7 L179.9 43.3 L181.2 48.0 L175.2 48.0 L174.7 43.3 L175.7 38.7 L176.6 34.0 L176.7 29.3 L178.0 24.7 L177.7 20.0 Z" fill="#233d2c"/><path d="M192.0 36.0 L191.5 36.0 L192.0 38.0 L193.2 40.0 L193.7 42.0 L193.0 44.0 L194.9 46.0 L193.7 48.0 L188.7 48.0 L190.6 46.0 L189.4 44.0 L190.8 42.0 L191.1 40.0 L190.8 38.0 L191.5 36.0 Z" fill="#2c4a32"/><path d="M266.0 30.0 L265.5 30.0 L266.3 33.0 L267.5 36.0 L267.8 39.0 L268.2 42.0 L268.0 45.0 L269.2 48.0 L264.2 48.0 L263.7 45.0 L264.6 42.0 L265.0 39.0 L265.4 36.0 L265.1 33.0 L265.5 30.0 Z" fill="#2c4a32"/><path d="M270 33 L285 34 L300 35 L318 33 L330 34 L350 35 L362 33 L380 31 L400 32 L420 31 L450 31 L470 30 L490 28 L510 25 L530 23 L548 22 L548 48 L270 48 Z" fill="#3b6a46"/><circle cx="307.1" cy="43.1" r="5.9" fill="#447c42"/><circle cx="312.7" cy="45.7" r="5.3" fill="#447c42"/><circle cx="457.1" cy="45.3" r="3.7" fill="#447c42"/><circle cx="413.2" cy="42.2" r="3.6" fill="#447c42"/><circle cx="544.9" cy="42.5" r="3.2" fill="#447c42"/><circle cx="369.1" cy="46.2" r="5.7" fill="#447c42"/><circle cx="504.0" cy="42.5" r="4.9" fill="#447c42"/><circle cx="475.2" cy="45.6" r="3.6" fill="#447c42"/><circle cx="539.7" cy="44.5" r="3.2" fill="#447c42"/><circle cx="337.2" cy="45.2" r="3.3" fill="#447c42"/><circle cx="393.0" cy="44.2" r="3.9" fill="#447c42"/><circle cx="287.9" cy="44.7" r="4.3" fill="#447c42"/><circle cx="510.3" cy="45.3" r="3.4" fill="#447c42"/><circle cx="299.3" cy="43.1" r="3.6" fill="#447c42"/><circle cx="317.0" cy="44.3" r="3.3" fill="#447c42"/><circle cx="380.9" cy="43.8" r="3.6" fill="#447c42"/><circle cx="304.4" cy="46.4" r="5.0" fill="#447c42"/><circle cx="399.9" cy="43.7" r="4.3" fill="#447c42"/><circle cx="371.9" cy="42.8" r="4.2" fill="#447c42"/><circle cx="352.3" cy="44.5" r="5.1" fill="#447c42"/><circle cx="288.9" cy="45.1" r="3.4" fill="#447c42"/><circle cx="368.2" cy="45.2" r="5.5" fill="#447c42"/><circle cx="443.9" cy="44.4" r="4.1" fill="#447c42"/><circle cx="385.3" cy="46.1" r="4.5" fill="#447c42"/><circle cx="299.9" cy="45.4" r="3.6" fill="#447c42"/><circle cx="527.7" cy="46.2" r="5.4" fill="#447c42"/><circle cx="298.9" cy="43.1" r="5.2" fill="#447c42"/><circle cx="505.7" cy="44.1" r="4.2" fill="#447c42"/><circle cx="414.6" cy="44.1" r="3.6" fill="#447c42"/><circle cx="509.7" cy="43.9" r="4.3" fill="#447c42"/><rect x="270" y="44" width="278" height="4" fill="#447c42"/><path d="M276.0 18.0 L275.8 18.0 L276.2 23.0 L276.9 28.0 L278.3 33.0 L278.9 38.0 L278.4 43.0 L278.7 48.0 L272.7 48.0 L273.2 43.0 L274.6 38.0 L274.8 33.0 L274.4 28.0 L274.8 23.0 L275.8 18.0 Z" fill="#2c4a32"/></g><rect x="345" y="43" width="22" height="3" fill="#8fb0d0" opacity="0.7"/><rect x="252" y="45" width="14" height="2" fill="#8fa8c0" opacity="0.5"/><rect x="89.5" y="0" width="1" height="48" fill="#2a5a8a" opacity="0.45"/><rect x="179.5" y="0" width="1" height="48" fill="#2a5a8a" opacity="0.45"/><rect x="269.5" y="0" width="1" height="48" fill="#2a5a8a" opacity="0.45"/><rect x="359.5" y="0" width="1" height="48" fill="#2a5a8a" opacity="0.45"/><rect x="449.5" y="0" width="1" height="48" fill="#2a5a8a" opacity="0.45"/></svg>
 <svg style="left:0;top:48px" width="548" height="32" viewBox="0 0 548 32"><path d="M0 32 L0 18 L0.0 18.7 L1.3 18.7 L1.3 18.4 L2.6 18.4 L2.6 17.0 L3.9 17.0 L3.9 13.4 L5.2 13.4 L5.2 14.3 L6.5 14.3 L6.5 15.1 L7.8 15.1 L7.8 13.2 L9.1 13.2 L9.1 18.7 L10.4 18.7 L10.4 17.2 L11.7 17.2 L11.7 15.1 L13.0 15.1 L13.0 11.7 L14.3 11.7 L14.3 15.7 L15.6 15.7 L15.6 18.9 L16.9 18.9 L16.9 14.9 L18.2 14.9 L18.2 17.2 L19.5 17.2 L19.5 16.5 L20.8 16.5 L20.8 17.0 L22.1 17.0 L22.1 18.4 L23.4 18.4 L23.4 17.2 L24.7 17.2 L24.7 20.8 L26.0 20.8 L26.0 19.2 L27.3 19.2 L27.3 16.1 L28.6 16.1 L28.6 17.5 L29.9 17.5 L29.9 15.1 L31.2 15.1 L31.2 14.8 L32.5 14.8 L32.5 18.6 L33.8 18.6 L33.8 18.2 L35.1 18.2 L35.1 19.2 L36.4 19.2 L36.4 15.8 L37.7 15.8 L37.7 16.9 L39.0 16.9 L39.0 15.3 L40.3 15.3 L40.3 17.4 L41.6 17.4 L41.6 19.8 L42.9 19.8 L42.9 16.1 L44.2 16.1 L44.2 16.3 L45.5 16.3 L45.5 20.5 L46.8 20.5 L46.8 18.9 L48.1 18.9 L48.1 21.8 L49.4 21.8 L49.4 16.8 L50.7 16.8 L50.7 17.2 L52.0 17.2 L52.0 13.9 L53.3 13.9 L53.3 15.6 L54.6 15.6 L54.6 19.2 L55.9 19.2 L55.9 21.2 L57.2 21.2 L57.2 17.6 L58.5 17.6 L58.5 20.0 L59.8 20.0 L59.8 16.5 L61.1 16.5 L61.1 17.9 L62.4 17.9 L62.4 19.2 L63.7 19.2 L63.7 20.9 L65.0 20.9 L65.0 19.1 L66.3 19.1 L66.3 13.8 L67.6 13.8 L67.6 16.9 L68.9 16.9 L68.9 19.3 L70.2 19.3 L70.2 15.4 L71.5 15.4 L71.5 17.6 L72.8 17.6 L72.8 19.1 L74.1 19.1 L74.1 15.0 L75.4 15.0 L75.4 16.2 L76.7 16.2 L76.7 18.3 L78.0 18.3 L78.0 18.4 L79.3 18.4 L79.3 20.9 L80.6 20.9 L80.6 15.5 L81.9 15.5 L81.9 15.8 L83.2 15.8 L83.2 14.6 L84.5 14.6 L84.5 16.1 L85.8 16.1 L85.8 18.2 L87.1 18.2 L87.1 18.5 L88.4 18.5 L88.4 14.8 L89.7 14.8 L89.7 16.6 L91.0 16.6 L91.0 18.6 L92.3 18.6 L92.3 14.8 L93.6 14.8 L93.6 19.3 L94.9 19.3 L94.9 19.5 L96.2 19.5 L96.2 20.2 L97.5 20.2 L97.5 18.5 L98.8 18.5 L98.8 18.6 L100.1 18.6 L100.1 15.5 L101.4 15.5 L101.4 19.4 L102.7 19.4 L102.7 18.8 L104.0 18.8 L104.0 15.4 L105.3 15.4 L105.3 15.5 L106.6 15.5 L106.6 21.0 L107.9 21.0 L107.9 19.2 L109.2 19.2 L109.2 18.0 L110.5 18.0 L110.5 19.1 L111.8 19.1 L111.8 14.8 L113.1 14.8 L113.1 15.9 L114.4 15.9 L114.4 17.0 L115.7 17.0 L115.7 13.5 L117.0 13.5 L117.0 18.7 L118.3 18.7 L118.3 13.0 L119.6 13.0 L119.6 16.8 L120.9 16.8 L120.9 17.8 L122.2 17.8 L122.2 17.7 L123.5 17.7 L123.5 12.5 L124.8 12.5 L124.8 11.1 L126.1 11.1 L126.1 15.6 L127.4 15.6 L127.4 19.1 L128.7 19.1 L128.7 18.4 L130.0 18.4 L130.0 17.4 L131.3 17.4 L131.3 14.7 L132.6 14.7 L132.6 15.0 L133.9 15.0 L133.9 17.4 L135.2 17.4 L135.2 16.2 L136.5 16.2 L136.5 17.1 L137.8 17.1 L137.8 19.3 L139.1 19.3 L139.1 15.8 L140.4 15.8 L140.4 14.9 L141.7 14.9 L141.7 16.6 L143.0 16.6 L143.0 18.8 L144.3 18.8 L144.3 17.6 L145.6 17.6 L145.6 17.6 L146.9 17.6 L146.9 15.2 L148.2 15.2 L148.2 15.6 L149.5 15.6 L149.5 15.3 L150.8 15.3 L150.8 13.0 L152.1 13.0 L152.1 16.1 L153.4 16.1 L153.4 17.0 L154.7 17.0 L154.7 17.8 L156.0 17.8 L156.0 16.0 L157.3 16.0 L157.3 21.9 L158.6 21.9 L158.6 15.9 L159.9 15.9 L159.9 14.7 L161.2 14.7 L161.2 17.7 L162.5 17.7 L162.5 17.2 L163.8 17.2 L163.8 19.4 L165.1 19.4 L165.1 16.6 L166.4 16.6 L166.4 18.7 L167.7 18.7 L167.7 17.7 L169.0 17.7 L169.0 19.4 L170.3 19.4 L170.3 15.2 L171.6 15.2 L171.6 21.5 L172.9 21.5 L172.9 18.3 L174.2 18.3 L174.2 16.6 L175.5 16.6 L175.5 19.5 L176.8 19.5 L176.8 17.7 L178.1 17.7 L178.1 15.0 L179.4 15.0 L179.4 11.0 L180.7 11.0 L180.7 15.9 L182.0 15.9 L182.0 16.2 L183.3 16.2 L183.3 19.2 L184.6 19.2 L184.6 15.5 L185.9 15.5 L185.9 18.9 L187.2 18.9 L187.2 17.6 L188.5 17.6 L188.5 16.4 L189.8 16.4 L189.8 18.5 L191.1 18.5 L191.1 18.6 L192.4 18.6 L192.4 15.9 L193.7 15.9 L193.7 13.6 L195.0 13.6 L195.0 15.8 L196.3 15.8 L196.3 16.5 L197.6 16.5 L197.6 20.9 L198.9 20.9 L198.9 16.1 L200.2 16.1 L200.2 11.1 L201.5 11.1 L201.5 17.6 L202.8 17.6 L202.8 16.4 L204.1 16.4 L204.1 16.4 L205.4 16.4 L205.4 15.0 L206.7 15.0 L206.7 16.0 L208.0 16.0 L208.0 20.3 L209.3 20.3 L209.3 20.6 L210.6 20.6 L210.6 17.2 L211.9 17.2 L211.9 18.9 L213.2 18.9 L213.2 15.9 L214.5 15.9 L214.5 18.9 L215.8 18.9 L215.8 14.6 L217.1 14.6 L217.1 16.0 L218.4 16.0 L218.4 14.8 L219.7 14.8 L219.7 18.1 L221.0 18.1 L221.0 21.7 L222.3 21.7 L222.3 13.2 L223.6 13.2 L223.6 15.3 L224.9 15.3 L224.9 12.0 L226.2 12.0 L226.2 16.7 L227.5 16.7 L227.5 15.2 L228.8 15.2 L228.8 17.9 L230.1 17.9 L230.1 10.7 L231.4 10.7 L231.4 17.2 L232.7 17.2 L232.7 16.4 L234.0 16.4 L234.0 19.1 L235.3 19.1 L235.3 18.7 L236.6 18.7 L236.6 17.6 L237.9 17.6 L237.9 16.3 L239.2 16.3 L239.2 14.7 L240.5 14.7 L240.5 16.5 L241.8 16.5 L241.8 18.6 L243.1 18.6 L243.1 19.2 L244.4 19.2 L244.4 17.9 L245.7 17.9 L245.7 21.9 L247.0 21.9 L247.0 17.1 L248.3 17.1 L248.3 15.3 L249.6 15.3 L249.6 16.1 L250.9 16.1 L250.9 16.8 L252.2 16.8 L252.2 18.2 L253.5 18.2 L253.5 12.1 L254.8 12.1 L254.8 15.7 L256.1 15.7 L256.1 18.2 L257.4 18.2 L257.4 18.9 L258.7 18.9 L258.7 16.8 L260.0 16.8 L260.0 14.6 L261.3 14.6 L261.3 17.4 L262.6 17.4 L262.6 16.0 L263.9 16.0 L263.9 14.9 L265.2 14.9 L265.2 14.8 L266.5 14.8 L266.5 16.6 L267.8 16.6 L267.8 20.6 L269.1 20.6 L269.1 16.1 L270.4 16.1 L270.4 17.8 L271.7 17.8 L271.7 18.6 L273.0 18.6 L273.0 19.1 L274.3 19.1 L274.3 15.2 L275.6 15.2 L275.6 15.4 L276.9 15.4 L276.9 18.6 L278.2 18.6 L278.2 17.5 L279.5 17.5 L279.5 21.5 L280.8 21.5 L280.8 16.3 L282.1 16.3 L282.1 19.8 L283.4 19.8 L283.4 15.9 L284.7 15.9 L284.7 16.9 L286.0 16.9 L286.0 16.3 L287.3 16.3 L287.3 15.4 L288.6 15.4 L288.6 17.4 L289.9 17.4 L289.9 16.0 L291.2 16.0 L291.2 15.5 L292.5 15.5 L292.5 15.6 L293.8 15.6 L293.8 13.5 L295.1 13.5 L295.1 15.7 L296.4 15.7 L296.4 19.0 L297.7 19.0 L297.7 14.8 L299.0 14.8 L299.0 16.8 L300.3 16.8 L300.3 18.8 L301.6 18.8 L301.6 16.4 L302.9 16.4 L302.9 20.0 L304.2 20.0 L304.2 15.5 L305.5 15.5 L305.5 17.0 L306.8 17.0 L306.8 18.5 L308.1 18.5 L308.1 16.5 L309.4 16.5 L309.4 14.9 L310.7 14.9 L310.7 18.2 L312.0 18.2 L312.0 13.4 L313.3 13.4 L313.3 17.8 L314.6 17.8 L314.6 19.4 L315.9 19.4 L315.9 16.7 L317.2 16.7 L317.2 15.9 L318.5 15.9 L318.5 13.4 L319.8 13.4 L319.8 13.5 L321.1 13.5 L321.1 19.3 L322.4 19.3 L322.4 16.9 L323.7 16.9 L323.7 16.0 L325.0 16.0 L325.0 17.1 L326.3 17.1 L326.3 16.3 L327.6 16.3 L327.6 16.5 L328.9 16.5 L328.9 16.3 L330.2 16.3 L330.2 20.1 L331.5 20.1 L331.5 15.6 L332.8 15.6 L332.8 18.4 L334.1 18.4 L334.1 14.8 L335.4 14.8 L335.4 18.8 L336.7 18.8 L336.7 18.0 L338.0 18.0 L338.0 18.6 L339.3 18.6 L339.3 15.1 L340.6 15.1 L340.6 16.6 L341.9 16.6 L341.9 16.3 L343.2 16.3 L343.2 12.8 L344.5 12.8 L344.5 16.9 L345.8 16.9 L345.8 12.8 L347.1 12.8 L347.1 19.3 L348.4 19.3 L348.4 17.4 L349.7 17.4 L349.7 17.5 L351.0 17.5 L351.0 19.2 L352.3 19.2 L352.3 18.6 L353.6 18.6 L353.6 17.1 L354.9 17.1 L354.9 15.4 L356.2 15.4 L356.2 14.1 L357.5 14.1 L357.5 15.7 L358.8 15.7 L358.8 17.1 L360.1 17.1 L360.1 16.6 L361.4 16.6 L361.4 17.6 L362.7 17.6 L362.7 19.4 L364.0 19.4 L364.0 18.9 L365.3 18.9 L365.3 16.4 L366.6 16.4 L366.6 19.1 L367.9 19.1 L367.9 18.8 L369.2 18.8 L369.2 17.0 L370.5 17.0 L370.5 11.9 L371.8 11.9 L371.8 14.5 L373.1 14.5 L373.1 15.6 L374.4 15.6 L374.4 14.6 L375.7 14.6 L375.7 17.7 L377.0 17.7 L377.0 16.7 L378.3 16.7 L378.3 17.3 L379.6 17.3 L379.6 16.3 L380.9 16.3 L380.9 15.5 L382.2 15.5 L382.2 19.0 L383.5 19.0 L383.5 15.7 L384.8 15.7 L384.8 13.1 L386.1 13.1 L386.1 15.2 L387.4 15.2 L387.4 17.8 L388.7 17.8 L388.7 18.5 L390.0 18.5 L390.0 16.5 L391.3 16.5 L391.3 12.8 L392.6 12.8 L392.6 17.3 L393.9 17.3 L393.9 13.8 L395.2 13.8 L395.2 20.1 L396.5 20.1 L396.5 18.0 L397.8 18.0 L397.8 17.4 L399.1 17.4 L399.1 18.5 L400.4 18.5 L400.4 15.1 L401.7 15.1 L401.7 14.7 L403.0 14.7 L403.0 14.9 L404.3 14.9 L404.3 16.2 L405.6 16.2 L405.6 15.2 L406.9 15.2 L406.9 19.3 L408.2 19.3 L408.2 19.9 L409.5 19.9 L409.5 18.4 L410.8 18.4 L410.8 17.7 L412.1 17.7 L412.1 17.9 L413.4 17.9 L413.4 13.3 L414.7 13.3 L414.7 14.6 L416.0 14.6 L416.0 15.0 L417.3 15.0 L417.3 17.6 L418.6 17.6 L418.6 14.8 L419.9 14.8 L419.9 17.4 L421.2 17.4 L421.2 15.7 L422.5 15.7 L422.5 16.5 L423.8 16.5 L423.8 16.6 L425.1 16.6 L425.1 18.9 L426.4 18.9 L426.4 18.2 L427.7 18.2 L427.7 15.2 L429.0 15.2 L429.0 19.2 L430.3 19.2 L430.3 15.7 L431.6 15.7 L431.6 19.0 L432.9 19.0 L432.9 19.3 L434.2 19.3 L434.2 21.3 L435.5 21.3 L435.5 11.7 L436.8 11.7 L436.8 16.6 L438.1 16.6 L438.1 17.5 L439.4 17.5 L439.4 15.1 L440.7 15.1 L440.7 15.5 L442.0 15.5 L442.0 15.5 L443.3 15.5 L443.3 15.8 L444.6 15.8 L444.6 19.9 L445.9 19.9 L445.9 16.8 L447.2 16.8 L447.2 16.8 L448.5 16.8 L448.5 14.7 L449.8 14.7 L449.8 11.7 L451.1 11.7 L451.1 21.9 L452.4 21.9 L452.4 16.9 L453.7 16.9 L453.7 18.4 L455.0 18.4 L455.0 18.1 L456.3 18.1 L456.3 18.4 L457.6 18.4 L457.6 16.6 L458.9 16.6 L458.9 17.8 L460.2 17.8 L460.2 16.7 L461.5 16.7 L461.5 18.5 L462.8 18.5 L462.8 21.7 L464.1 21.7 L464.1 14.9 L465.4 14.9 L465.4 18.0 L466.7 18.0 L466.7 19.1 L468.0 19.1 L468.0 11.1 L469.3 11.1 L469.3 16.5 L470.6 16.5 L470.6 17.2 L471.9 17.2 L471.9 15.1 L473.2 15.1 L473.2 17.5 L474.5 17.5 L474.5 16.8 L475.8 16.8 L475.8 19.1 L477.1 19.1 L477.1 15.0 L478.4 15.0 L478.4 17.0 L479.7 17.0 L479.7 16.6 L481.0 16.6 L481.0 18.0 L482.3 18.0 L482.3 18.4 L483.6 18.4 L483.6 17.1 L484.9 17.1 L484.9 15.5 L486.2 15.5 L486.2 17.5 L487.5 17.5 L487.5 19.2 L488.8 19.2 L488.8 18.0 L490.1 18.0 L490.1 13.9 L491.4 13.9 L491.4 13.7 L492.7 13.7 L492.7 17.9 L494.0 17.9 L494.0 16.1 L495.3 16.1 L495.3 14.6 L496.6 14.6 L496.6 22.1 L497.9 22.1 L497.9 16.7 L499.2 16.7 L499.2 17.7 L500.5 17.7 L500.5 14.7 L501.8 14.7 L501.8 15.5 L503.1 15.5 L503.1 16.6 L504.4 16.6 L504.4 15.0 L505.7 15.0 L505.7 12.4 L507.0 12.4 L507.0 16.9 L508.3 16.9 L508.3 19.3 L509.6 19.3 L509.6 15.9 L510.9 15.9 L510.9 15.6 L512.2 15.6 L512.2 18.5 L513.5 18.5 L513.5 17.5 L514.8 17.5 L514.8 17.7 L516.1 17.7 L516.1 18.3 L517.4 18.3 L517.4 16.8 L518.7 16.8 L518.7 19.2 L520.0 19.2 L520.0 16.1 L521.3 16.1 L521.3 13.7 L522.6 13.7 L522.6 16.2 L523.9 16.2 L523.9 16.3 L525.2 16.3 L525.2 17.5 L526.5 17.5 L526.5 19.0 L527.8 19.0 L527.8 13.6 L529.1 13.6 L529.1 15.1 L530.4 15.1 L530.4 16.6 L531.7 16.6 L531.7 17.3 L533.0 17.3 L533.0 15.2 L534.3 15.2 L534.3 14.1 L535.6 14.1 L535.6 13.2 L536.9 13.2 L536.9 18.5 L538.2 18.5 L538.2 14.8 L539.5 14.8 L539.5 15.3 L540.8 15.3 L540.8 15.5 L542.1 15.5 L542.1 19.3 L543.4 19.3 L543.4 18.6 L544.7 18.6 L544.7 18.7 L546.0 18.7 L546.0 19.2 L547.3 19.2 L547.3 17.2 L548.6 17.2 L548 18 L548 32 Z" fill="#23b985"/><rect x="343" y="12" width="1.2" height="20" fill="#1c6d4b" opacity="0.8"/></svg>
</div>
<div class="a" style="left:109px;top:674px;width:80px;height:20px;border-radius:4px;background:rgba(20,40,70,0.85)"></div>
<svg style="left:111px;top:676px" width="16" height="16" viewBox="0 0 16 16">
 <rect x="0.8" y="0.8" width="14.4" height="14.4" rx="1.5" fill="none" stroke="#ddd" stroke-width="1.4"/>
 <path d="M4 0.8 V15.2 M12 0.8 V15.2 M4 8 H12 M0.8 4.5 H4 M0.8 8 H4 M0.8 11.5 H4 M12 4.5 H15.2 M12 8 H15.2 M12 11.5 H15.2" stroke="#ddd" stroke-width="1.3"/>
</svg>
<div class="t" style="left:133px;top:678px;font-size:12px;color:#e6e6e6;letter-spacing:0.05px">A nice day</div>
<div class="a" style="left:193px;top:674px;width:20px;height:20px;border-radius:4px;background:rgba(20,40,70,0.85)"></div>
<svg style="left:196px;top:678px" width="14" height="12" viewBox="0 0 14 12"><path d="M1 4 H4 L8 0.8 V11.2 L4 8 H1 Z" fill="#ddd"/><path d="M10 3.5 Q11.5 6 10 8.5" stroke="#ddd" stroke-width="1.2" fill="none"/></svg>
<!-- playhead -->
<div class="a" style="left:441px;top:548px;width:2px;height:279px;background:#ee4545"></div>
<svg style="left:436px;top:535px" width="14" height="15" viewBox="0 0 14 15"><path d="M0 1 Q0 0 1 0 H12.5 Q13.5 0 13.5 1 V9.5 L6.75 14.5 L0 9.5 Z" fill="#ee4545"/></svg>
<div class="a" style="left:432px;top:674px;width:20px;height:28px;border-radius:10px;background:#ee4545"></div>
<svg style="left:435px;top:680px" width="14" height="16" viewBox="0 0 14 16">
 <path d="M3 0.5 L9 10 M11 0.5 L5 10" stroke="#fff" stroke-width="1.6"/>
 <circle cx="3.8" cy="12.3" r="2.2" fill="none" stroke="#fff" stroke-width="1.5"/>
 <circle cx="10.2" cy="12.3" r="2.2" fill="none" stroke="#fff" stroke-width="1.5"/>
</svg>



<!-- DIALOG -->
<div class="a" style="left:524px;top:643px;width:280px;height:3px;background:rgba(10,10,10,0.85)"></div>
<div class="a" style="left:525px;top:186px;width:275px;height:454px;background:#232323"></div>
<div class="a" style="left:525px;top:186px;width:275px;height:34px;background:#151515"></div>
<div class="a" style="left:522px;top:180px;width:281px;height:463px;border:3px solid #fb1e10;border-radius:2px"></div>
<svg style="left:532px;top:195px" width="16" height="16" viewBox="0 0 16 16">
 <rect x="0" y="0" width="16" height="16" rx="3.5" fill="#d8344a"/>
 <rect x="3.6" y="2" width="2" height="8" fill="#fff"/>
 <path d="M6.6 2.2 L8.6 8.6 L10.4 4.6" stroke="#fff" stroke-width="1.1" fill="none"/>
 <circle cx="14" cy="5" r="0.8" fill="#f4a030"/><circle cx="12.2" cy="8.8" r="0.7" fill="#f4a030"/>
 <rect x="1.8" y="11.3" width="12.4" height="3.2" rx="1.6" fill="#f4f4f4"/>
 <rect x="3" y="12.2" width="5.5" height="1.4" fill="#d8344a"/>
 <rect x="8.5" y="12.2" width="4.5" height="1.4" fill="#555"/>
</svg>
<div class="t" style="left:556px;top:196px;font-size:14px;font-weight:bold;color:#fff;letter-spacing:0.2px">Select color</div>
<svg style="left:779px;top:196px" width="14" height="14" viewBox="0 0 14 14"><path d="M0.6 0.6 L13 13 M13 0.6 L0.6 13" stroke="#f0f0f0" stroke-width="1.5"/></svg>
<!-- wheel -->
<div class="a" style="left:560.5px;top:225.5px;width:205.5px;height:205.5px;border-radius:50%;background:conic-gradient(from 0deg,#80ff00 0deg,#00ff00 30deg,#00ffff 90deg,#0000ff 150deg,#ff00ff 210deg,#ff0000 270deg,#ffff00 330deg,#80ff00 360deg)"></div>
<div class="a" style="left:576px;top:241px;width:175px;height:175px;border-radius:50%;background:#232323"></div>
<div class="a" style="left:606px;top:271px;width:116px;height:116px;background:linear-gradient(180deg,rgba(0,0,0,0),#000),linear-gradient(90deg,#fff 0%,#ff9aac 25%,#ff5a78 55%,#ff1446 100%)"></div>
<svg style="left:675px;top:261px" width="20" height="20" viewBox="0 0 20 20"><circle cx="10" cy="9.8" r="5.9" fill="none" stroke="#050505" stroke-width="1.8"/><circle cx="10" cy="9.8" r="4.6" fill="none" stroke="#f2f2f2" stroke-width="1.1"/></svg>
<div class="a" style="left:563px;top:343px;width:16px;height:10px;background:#ff1a47;border:2px solid #f4f4f4;box-shadow:0 0 0 1px #222;transform:rotate(-12deg)"></div>
<!-- mode -->
<div class="a" style="left:533px;top:427px;width:60px;height:20px;background:#2b2b2b"></div>
<div class="t" style="left:537.5px;top:431px;font-size:11.5px;color:#eee">HSV</div>
<svg style="left:578px;top:433px" width="8" height="7" viewBox="0 0 8 7"><path d="M0 0 H8 L4 6.5 Z" fill="#ccc"/></svg>
<div class="t" style="left:535px;top:454px;font-size:12px;color:#ddd">Hex</div>
<div class="a" style="left:561px;top:449px;width:72px;height:20px;border:1px solid #444;background:#232323"></div>
<div class="t" style="left:563.5px;top:454.5px;font-size:12px;color:#eee;letter-spacing:0.05px">#FF517497</div>
<div class="a" style="left:579px;top:474px;width:48px;height:19px;background:#2c2c2c"></div>
<div class="t" style="left:547px;top:478px;font-size:12px;color:#eee">HSV</div>
<div class="t" style="left:591px;top:478px;font-size:12px;color:#eee">HSL</div>
<div class="t" style="left:635px;top:478px;font-size:12px;color:#eee">RGB</div>
<div class="a" style="left:533px;top:493px;width:262px;height:104px;background:#272727"></div>
<!-- sliders -->
<div class="t" style="left:539.3px;top:509px;font-size:12px;color:#eee">H</div>
<div class="t" style="left:539.8px;top:529px;font-size:12px;color:#eee">S</div>
<div class="t" style="left:541px;top:549px;font-size:12px;color:#eee">L</div>
<div class="t" style="left:540.8px;top:569px;font-size:12px;color:#eee">A</div>
<div class="a" style="left:553px;top:509px;width:193px;height:12px;border-radius:6px;background:linear-gradient(90deg,#f00 3%,#ff0 18.5%,#0f0 33.5%,#0ff 49%,#00f 66%,#f0f 82%,#f0f 100%)"></div>
<div class="a" style="left:553px;top:529px;width:193px;height:12px;border-radius:6px;background:linear-gradient(90deg,#a8a8a8,#ff5174)"></div>
<div class="a" style="left:553px;top:549px;width:193px;height:12px;border-radius:6px;background:linear-gradient(90deg,#000 3%,#ff0033 50%,#fff 97%)"></div>
<div class="a" style="left:553px;top:569px;width:193px;height:12px;border-radius:6px;background-color:#fff;background-image:linear-gradient(90deg,rgba(255,81,116,0),#ff5174),linear-gradient(45deg,#ddd 25%,transparent 25%,transparent 75%,#ddd 75%),linear-gradient(45deg,#ddd 25%,transparent 25%,transparent 75%,#ddd 75%);background-size:100% 100%,8px 8px,8px 8px;background-position:0 0,0 0,4px 4px"></div>
<div class="a" style="left:728px;top:509px;width:12px;height:12px;border-radius:50%;background:#f0f;border:1.5px solid #f4f4f4;box-shadow:0 0 0 1px #111"></div>
<div class="a" style="left:734px;top:529px;width:12px;height:12px;border-radius:50%;background:#ff5174;border:1.5px solid #f4f4f4;box-shadow:0 0 0 1px #111"></div>
<div class="a" style="left:672px;top:549px;width:12px;height:12px;border-radius:50%;background:#f45070;border:1.5px solid #f4f4f4;box-shadow:0 0 0 1px #111"></div>
<div class="a" style="left:660px;top:569px;width:12px;height:12px;border-radius:50%;background:#f4a0b0;border:1.5px solid #f4f4f4;box-shadow:0 0 0 1px #111"></div>
<div class="t" style="left:754px;top:508.5px;font-size:12px;color:#eee">348.1</div>
<div class="t" style="left:755px;top:528.5px;font-size:12px;color:#eee">100.0</div>
<div class="t" style="left:757px;top:548.5px;font-size:12px;color:#eee">65.9</div>
<div class="t" style="left:760px;top:568.5px;font-size:12px;color:#eee">151</div>
<div class="a" style="left:653px;top:614px;width:60px;height:20px;background:#f4504a;border-radius:3px"></div>
<div class="t" style="left:675px;top:619px;font-size:12px;color:#fff">OK</div>
<div class="a" style="left:723px;top:614px;width:60px;height:20px;background:#474747;border-radius:3px"></div>
<div class="t" style="left:733.5px;top:619px;font-size:12px;color:#e6e6e6">Cancel</div>

</body></html>
